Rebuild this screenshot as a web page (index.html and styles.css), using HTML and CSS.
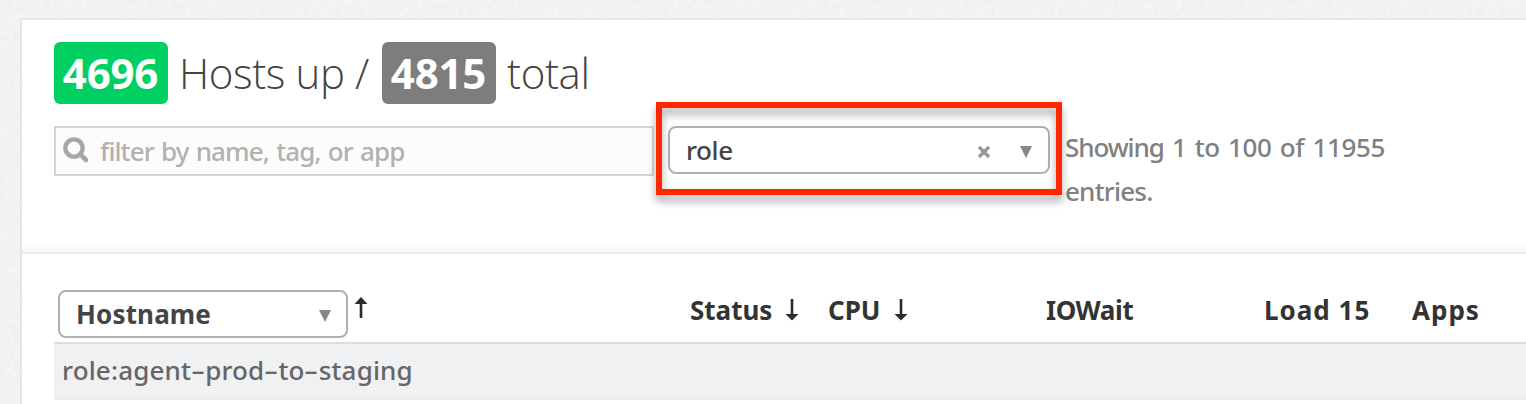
FILE: index.html
```
<!DOCTYPE html>
<html lang="en">
<head>
<meta charset="utf-8">
<title>Hosts</title>
<link rel="stylesheet" href="styles.css">
</head>
<body>
<svg class="texture" aria-hidden="true">
  <filter id="grain" color-interpolation-filters="sRGB">
    <feTurbulence type="fractalNoise" baseFrequency="0.22" numOctaves="3" seed="4"/>
    <feColorMatrix values="0.04 0 0 0 0.931  0.04 0 0 0 0.931  0.04 0 0 0 0.931  0 0 0 0 1"/>
  </filter>
  <rect width="100%" height="100%" filter="url(#grain)"/>
</svg>
<main class="panel">
  <header class="summary">
    <h1 class="title">
      <span class="badge badge-up">4696</span>
      <span class="title-up">Hosts up /</span>
      <span class="badge badge-total">4815</span>
      <span class="title-total">total</span>
    </h1>
    <div class="filters">
      <div class="search">
        <svg class="search-icon" viewBox="0 0 26 26"><circle cx="11" cy="11" r="8.6" fill="none" stroke="currentColor" stroke-width="4.4"/><path d="M17.4 17.4 23 23" stroke="currentColor" stroke-width="4.6" stroke-linecap="round"/></svg>
        <span class="placeholder">filter by name, tag, or app</span>
      </div>
      <div class="group">
        <div class="select select-role">
          <span class="role">role</span>
          <svg class="clear" viewBox="0 0 14 14"><path d="M2 2l10 10M12 2L2 12" stroke="currentColor" stroke-width="3.4"/></svg>
          <svg class="caret" viewBox="0 0 12 12"><path d="M0 0h12L6 12z" fill="currentColor"/></svg>
        </div>
        <div class="highlight"></div>
      </div>
      <p class="info"><span class="info-a"><span class="info-verb">Showing</span> 1 to 100 of 11955</span><br><span class="info-b">entries.</span></p>
    </div>
  </header>
  <section class="hosts">
    <div class="columns">
      <div class="col col-host">
        <div class="select select-host">
          <span class="hostname">Hostname</span>
          <svg class="caret" viewBox="0 0 12 12"><path d="M0 0h12L6 12z" fill="currentColor"/></svg>
        </div>
        <svg class="arrow arrow-up" viewBox="0 0 14 22"><path d="M7 21V3" stroke="currentColor" stroke-width="2.6"/><path d="M7 0l6.5 7H.5z" fill="currentColor"/></svg>
      </div>
      <div class="col col-status"><span class="t-status">Status</span><svg class="arrow" viewBox="0 0 14 22"><path d="M7 0v18" stroke="currentColor" stroke-width="2.6"/><path d="M7 21.5l6.5-6.5H.5z" fill="currentColor"/></svg></div>
      <div class="col col-cpu"><span class="t-cpu">CPU</span><svg class="arrow" viewBox="0 0 14 22"><path d="M7 0v18" stroke="currentColor" stroke-width="2.6"/><path d="M7 21.5l6.5-6.5H.5z" fill="currentColor"/></svg></div>
      <div class="col col-iowait"><span class="t-iowait">IOWait</span></div>
      <div class="col col-load"><span class="t-load">Load 15</span></div>
      <div class="col"><span class="t-apps">Apps</span></div>
    </div>
    <div class="row"><span class="row-name">role:agent<span class="dash">-</span>prod<span class="dash">-</span>to<span class="dash">-</span>staging</span></div>
  </section>
</main>
</body>
</html>
```
FILE: styles.css
```
* { box-sizing: border-box; }
body {
  margin: 0;
  height: 404px;
  overflow: hidden;
  padding: 18px 0 0 20px;
  background: #f3f3f3;
  font-family: "Noto Sans", "Open Sans", sans-serif;
  font-size: 26px;
  font-weight: 500;
  white-space: nowrap;
}
.texture { position: absolute; inset: 0; width: 100%; height: 100%; z-index: -1; }
.panel {
  height: 386px;
  border: solid #e6e6e6;
  border-width: 2px 0 0 2px;
  background: #fff;
}
.summary {
  height: 234px;
  padding: 22px 0 0 32px;
  background: linear-gradient(#e9ecec, #e9ecec) bottom / 100% 2px no-repeat,
    linear-gradient(#fff, #f2f4f4) bottom / 100% 11px no-repeat, #fff;
}
.title {
  display: flex;
  margin: 0;
  height: 62px;
  font: 300 42px/62px "Open Sans", sans-serif;
  letter-spacing: -0.4px;
  color: #444;
}
.badge {
  width: 114px;
  padding-right: 1px;
  border-radius: 6px;
  color: #fff;
  font-weight: 700;
  letter-spacing: -0.2px;
  text-align: center;
}
.badge-up { background: #00cf62; }
.badge-total { background: #7d7d7d; }
.title-up { width: 214px; padding-left: 11px; }
.title-total { padding-left: 11px; }
.filters { display: flex; align-items: flex-start; padding-top: 22px; }
.search {
  display: flex;
  align-items: center;
  width: 600px;
  height: 50px;
  padding-left: 7px;
  border: 2px solid #d4d4d4;
  background: #fcfcfc;
  color: #b1b1b1;
}
.search-icon { width: 26px; height: 26px; margin: 0 11px 2px 0; color: #a6a6a6; }
.placeholder { letter-spacing: -0.9px; word-spacing: 1.3px; }
.group { position: relative; margin-left: 14px; }
.select {
  display: flex;
  align-items: center;
  height: 48px;
  padding: 0 16px;
  border: 2px solid #b0b0b0;
  border-radius: 8px;
  background: #fff;
  color: #444;
}
.select-role { width: 382px; }
.select-host { width: 290px; }
.highlight {
  position: absolute;
  left: -12px;
  top: -24px;
  width: 406px;
  height: 93px;
  border: 6px solid #ff2600;
  filter: drop-shadow(0 6px 4px rgba(0, 0, 0, 0.35));
}
.role { flex: 1; letter-spacing: -0.4px; }
.hostname { flex: 1; font-weight: 700; letter-spacing: 0.15px; }
.clear { width: 14px; height: 14px; margin: 4px 29px 0 0; color: #999; }
.caret { width: 12px; height: 12px; margin-top: 3px; color: #888; }
.select-host .caret { margin-right: -1px; }
.info { margin: -1px 0 0 15px; line-height: 44px; color: #808080; }
.info-a { letter-spacing: -0.35px; word-spacing: 1.8px; }
.info-verb { letter-spacing: -1.1px; }
.info-b { letter-spacing: -0.8px; }
.hosts { padding-left: 32px; }
.columns {
  display: flex;
  height: 90px;
  padding-top: 36px;
  border-bottom: 2px solid #dcdcdc;
  color: #333;
  font-weight: 700;
}
.col { display: flex; height: 48px; line-height: 41px; }
.col-host { width: 636px; padding-left: 4px; }
.col-status { width: 138px; }
.col-cpu { width: 218px; }
.col-iowait { width: 218px; }
.col-load { width: 148px; }
.t-iowait { letter-spacing: -0.4px; }
.t-load { letter-spacing: 1px; }
.t-apps { letter-spacing: 1px; }
.arrow { width: 14px; height: 22px; margin: 9px 0 0 13px; color: #2b2b2b; }
.arrow-up { margin: 7px 0 0 6px; }
.row {
  height: 56px;
  padding-left: 8px;
  border-bottom: 2px solid #eee;
  background: #f0f1f3;
  color: #666;
  line-height: 53px;
}
.row-name { letter-spacing: 0.15px; }
.dash { display: inline-block; margin: 0 2.8px; transform: scaleX(1.7); }
```
